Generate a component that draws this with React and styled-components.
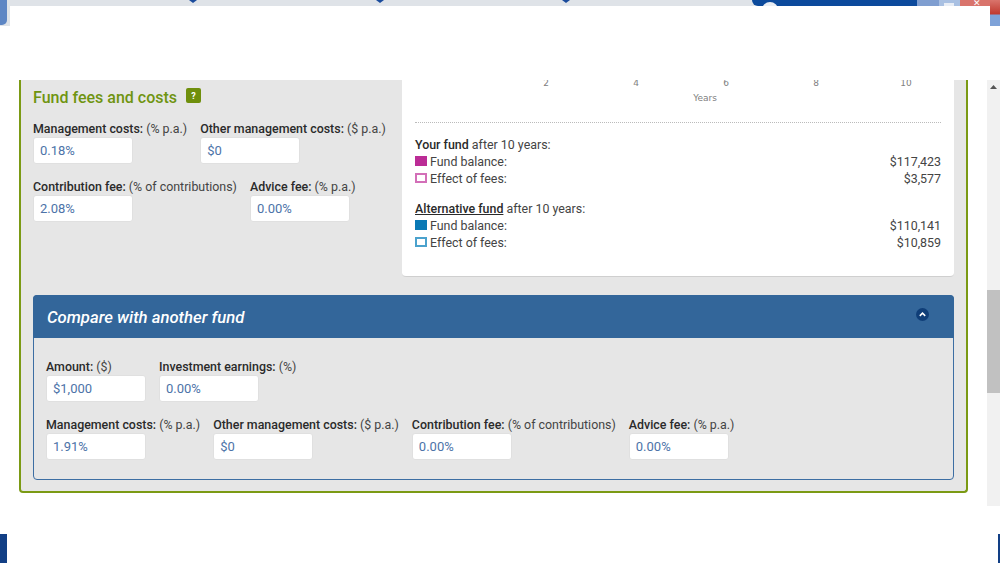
import React from "react";
import styled, { createGlobalStyle } from "styled-components";

const Global = createGlobalStyle`
  html, body { margin: 0; padding: 0; background: #fff; overflow: hidden; }
  * { box-sizing: border-box; }
`;

const Page = styled.div`
  position: relative;
  width: 1000px;
  height: 563px;
  overflow: hidden;
  background: #fff;
  font-family: Roboto, "Liberation Sans", sans-serif;
  font-size: 12.42px;
  color: #333;
`;

const Chrome = styled.div`
  position: relative;
  display: flex;
  height: 26px;
  background: #fff;
`;
const ChromeEdge = styled.div`
  width: 10px;
  height: 26px;
  background: #dfe3e8;
`;
const ChromeEdgeBlue = styled.div`
  width: 7px;
  height: 25px;
  background: #5d86c4;
  border-radius: 0 0 5px 0;
`;
const ChromeStrip = styled.div`
  display: flex;
  flex: 1;
  height: 6px;
  background: #dfe3e8;
`;
const TabNotch = styled.div`
  width: ${(p) => p.$w}px;
  margin-left: ${(p) => p.$at}px;
  height: 3px;
  background: #1a4b9c;
  clip-path: polygon(0 0, 100% 0, 50% 100%);
`;
const BlueBar = styled.div`
  position: relative;
  margin-left: auto;
  width: 165px;
  height: 6px;
  background: #0c4a9c;
  border-radius: 0 0 0 6px;
  overflow: hidden;
`;
const BarDot = styled.div`
  position: absolute;
  left: 10px;
  top: 2px;
  width: 16px;
  height: 16px;
  border-radius: 50%;
  background: #e9edf3;
`;
const WinBtn = styled.div`
  position: relative;
  width: ${(p) => p.$w}px;
  height: 6px;
  background: ${(p) => p.$bg};
  color: #fff;
  overflow: hidden;
`;
const RestoreMark = styled.div`
  position: absolute;
  left: 5px;
  top: 3px;
  width: 10px;
  height: 8px;
  background: #e8edf5;
`;
const CloseMark = styled.span`
  position: absolute;
  left: 13px;
  top: -2px;
  font-size: 9px;
  line-height: 10px;
  font-family: "DejaVu Sans", sans-serif;
`;
const Overlay = styled.div`
  position: absolute;
  left: 10px;
  right: 10px;
  top: 6px;
  height: 20px;
  background: #fff;
`;
const EdgeRight = styled.div`
  width: 10px;
  height: 26px;
  background: linear-gradient(#d9746c 0, #c0392f 14px, #7ea2d8 15px, #7ea2d8 100%);
`;

const Main = styled.div`
  display: flex;
  align-items: flex-start;
  margin-top: 54px;
  padding-left: 19px;
`;
const Panel = styled.section`
  width: 949px;
  height: 413px;
  padding: 0 12px;
  background: #e6e6e6;
  border: 2px solid #7b9a14;
  border-top: 0;
  border-radius: 0 0 4px 4px;
`;
const TopRow = styled.div`
  display: flex;
  height: 196px;
`;
const LeftCol = styled.div`
  width: 369px;
`;
const HeadingRow = styled.div`
  display: flex;
  align-items: center;
  gap: 9px;
  height: 34px;
`;
const Heading = styled.h2`
  margin: 0;
  font-size: 16px;
  font-weight: 500;
  color: #6f9410;
`;
const HelpBadge = styled.span`
  display: flex;
  align-items: center;
  justify-content: center;
  width: 15px;
  height: 15px;
  margin-top: -3px;
  border-radius: 2px;
  background: #6f8f0c;
  color: #fff;
  font-size: 9px;
  font-weight: 700;
`;
const FieldRow = styled.div`
  display: flex;
  gap: 13px;
  margin-top: ${(p) => p.$top || 0}px;
`;
const Field = styled.div`
  display: flex;
  flex-direction: column;
`;
const Label = styled.div`
  height: 23px;
  padding-top: 7px;
  line-height: 15px;
  white-space: nowrap;
  color: #444;
`;
const LabelStrong = styled.span`
  font-weight: 500;
  color: #2a2a2a;
`;
const InputBox = styled.div`
  width: 100px;
  height: 27px;
  padding: 0 6px;
  line-height: 25px;
  background: #fff;
  border: 1px solid #e0e0e0;
  border-radius: 3px;
  font-size: 13px;
  color: #4d73a8;
`;

const Card = styled.div`
  flex: none;
  width: 552px;
  height: 197px;
  padding: 0 13px;
  background: #fff;
  border-bottom: 1px solid #cfcfcf;
  border-radius: 0 0 4px 4px;
`;
const AxisSvg = styled.svg`
  display: block;
  width: 526px;
  height: 29px;
  font-family: "DejaVu Sans", sans-serif;
  font-size: 9px;
  fill: #808080;
`;
const Divider = styled.div`
  margin-top: 13px;
  border-top: 1px dotted #bbb;
`;
const Summary = styled.div`
  margin-top: ${(p) => p.$top}px;
  line-height: 17px;
  color: #444;
`;
const SummaryRow = styled.div`
  display: flex;
  align-items: center;
  height: 17px;
`;
const Swatch = styled.span`
  width: 12px;
  height: 10px;
  margin: -1px 3px 0 0;
  border: 2px solid ${(p) => p.$color};
  background: ${(p) => (p.$filled ? p.$color : "#fff")};
`;
const Value = styled.span`
  margin-left: auto;
`;
const UnderStrong = styled(LabelStrong)`
  text-decoration: underline;
`;

const Compare = styled.section`
  margin-top: 19px;
  height: 185px;
  border: 1px solid #3d6ea3;
  border-radius: 4px;
`;
const CompareHead = styled.div`
  display: flex;
  align-items: center;
  justify-content: space-between;
  height: 43px;
  margin: -1px -1px 0;
  padding: 2px 25px 0 14px;
  background: #33669a;
  border-radius: 4px 4px 0 0;
`;
const CompareTitle = styled.h3`
  margin: 0;
  font-size: 16.7px;
  font-weight: 500;
  font-style: italic;
  color: #fff;
`;
const Collapse = styled.svg`
  display: block;
  width: 13px;
  height: 13px;
  margin-top: -6px;
`;
const CompareBody = styled.div`
  padding: 14px 12px 0;
`;

const Scrollbar = styled.div`
  position: relative;
  flex: none;
  width: 13px;
  height: 426px;
  margin-left: 19px;
  background: #f1f1f1;
`;
const ScrollArrow = styled.div`
  position: absolute;
  left: 3px;
  top: 5px;
  width: 7px;
  height: 4px;
  background: #555;
  clip-path: polygon(50% 0, 100% 100%, 0 100%);
`;
const ScrollThumb = styled.div`
  position: absolute;
  left: 0;
  right: 0;
  top: 210px;
  height: 103px;
  background: #c1c1c1;
`;
const DeskCorner = styled.div`
  position: absolute;
  bottom: 0;
  ${(p) => p.$side}: 0;
  width: ${(p) => p.$w}px;
  height: 29px;
  background: #123f85;
`;

const F = ({ name, unit, value }) => (
  <Field>
    <Label>
      <LabelStrong>{name}:</LabelStrong> {unit}
    </Label>
    <InputBox>{value}</InputBox>
  </Field>
);

const ticks = [
  [131, "2"],
  [221, "4"],
  [311, "6"],
  [401, "8"],
  [491, "10"],
];

export default function App() {
  return (
    <Page>
      <Global />
      <Chrome>
        <ChromeEdge>
          <ChromeEdgeBlue />
        </ChromeEdge>
        <ChromeStrip>
          <TabNotch $w={8} $at={179} />
          <TabNotch $w={8} $at={179} />
          <TabNotch $w={8} $at={178} />
          <BlueBar>
            <BarDot />
          </BlueBar>
          <WinBtn $w={22} $bg="#7f9ed0" />
          <WinBtn $w={21} $bg="#a9c0e2">
            <RestoreMark />
          </WinBtn>
          <WinBtn $w={30} $bg="#d9746c">
            <CloseMark>✕</CloseMark>
          </WinBtn>
        </ChromeStrip>
        <EdgeRight />
        <Overlay />
      </Chrome>
      <Main>
        <Panel>
          <TopRow>
            <LeftCol>
              <HeadingRow>
                <Heading>Fund fees and costs</Heading>
                <HelpBadge>?</HelpBadge>
              </HeadingRow>
              <FieldRow>
                <F name="Management costs" unit="(% p.a.)" value="0.18%" />
                <F name="Other management costs" unit="($ p.a.)" value="$0" />
              </FieldRow>
              <FieldRow $top={8}>
                <F name="Contribution fee" unit="(% of contributions)" value="2.08%" />
                <F name="Advice fee" unit="(% p.a.)" value="0.00%" />
              </FieldRow>
            </LeftCol>
            <Card>
              <AxisSvg viewBox="0 0 526 29">
                {ticks.map(([x, t]) => (
                  <text key={t} x={x} y={5.5} textAnchor="middle">
                    {t}
                  </text>
                ))}
                <text x={290} y={21} textAnchor="middle">
                  Years
                </text>
              </AxisSvg>
              <Divider />
              <Summary $top={13}>
                <div>
                  <LabelStrong>Your fund</LabelStrong> after 10 years:
                </div>
                <SummaryRow>
                  <Swatch $color="#bb2c96" $filled />
                  Fund balance:
                  <Value>$117,423</Value>
                </SummaryRow>
                <SummaryRow>
                  <Swatch $color="#d36fb8" />
                  Effect of fees:
                  <Value>$3,577</Value>
                </SummaryRow>
              </Summary>
              <Summary $top={13}>
                <div>
                  <UnderStrong>Alternative fund</UnderStrong> after 10 years:
                </div>
                <SummaryRow>
                  <Swatch $color="#0a79b5" $filled />
                  Fund balance:
                  <Value>$110,141</Value>
                </SummaryRow>
                <SummaryRow>
                  <Swatch $color="#4ba2cd" />
                  Effect of fees:
                  <Value>$10,859</Value>
                </SummaryRow>
              </Summary>
            </Card>
          </TopRow>
          <Compare>
            <CompareHead>
              <CompareTitle>Compare with another fund</CompareTitle>
              <Collapse viewBox="0 0 13 13">
                <circle cx="6.5" cy="6.5" r="6.5" fill="#0f3e78" />
                <path d="M3.8 7.8 6.5 5.2 9.2 7.8" fill="none" stroke="#fff" strokeWidth="1.6" />
              </Collapse>
            </CompareHead>
            <CompareBody>
              <FieldRow>
                <F name="Amount" unit="($)" value="$1,000" />
                <F name="Investment earnings" unit="(%)" value="0.00%" />
              </FieldRow>
              <FieldRow $top={8}>
                <F name="Management costs" unit="(% p.a.)" value="1.91%" />
                <F name="Other management costs" unit="($ p.a.)" value="$0" />
                <F name="Contribution fee" unit="(% of contributions)" value="0.00%" />
                <F name="Advice fee" unit="(% p.a.)" value="0.00%" />
              </FieldRow>
            </CompareBody>
          </Compare>
        </Panel>
        <Scrollbar>
          <ScrollArrow />
          <ScrollThumb />
        </Scrollbar>
      </Main>
      <DeskCorner $side="left" $w={7} />
      <DeskCorner $side="right" $w={2} />
    </Page>
  );
}
